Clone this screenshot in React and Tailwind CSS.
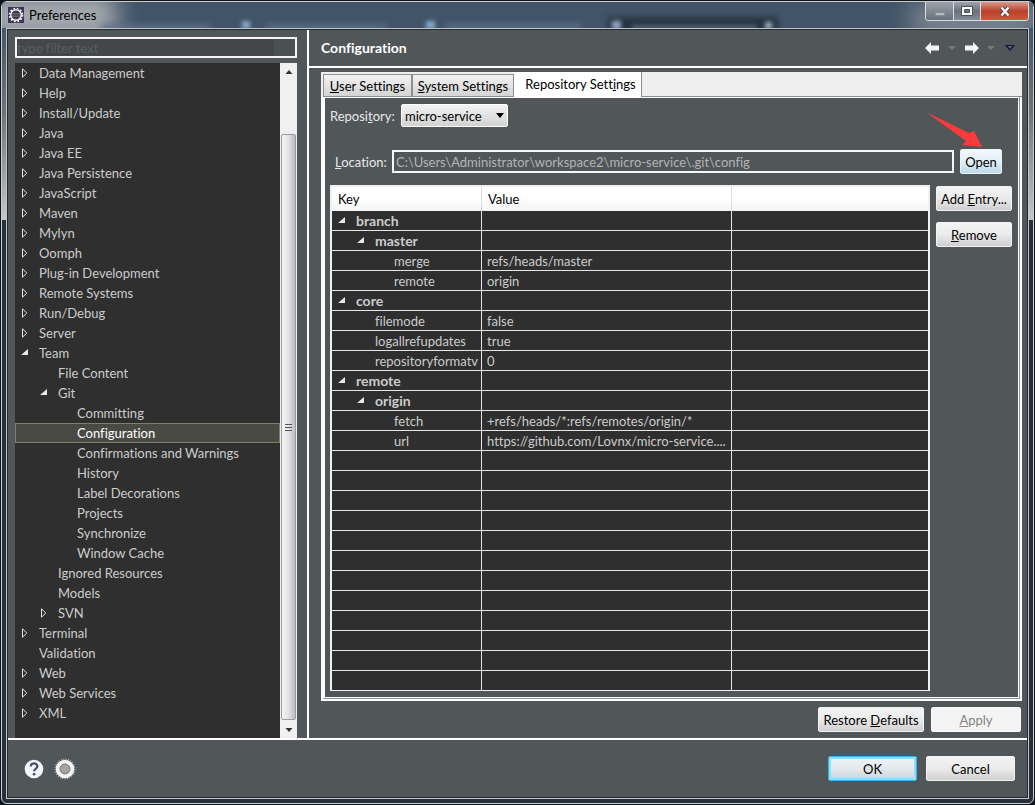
import React, { useState } from 'react';

const treeItems = [
  { label: 'Data Management', level: 0, state: 'closed' },
  { label: 'Help', level: 0, state: 'closed' },
  { label: 'Install/Update', level: 0, state: 'closed' },
  { label: 'Java', level: 0, state: 'closed' },
  { label: 'Java EE', level: 0, state: 'closed' },
  { label: 'Java Persistence', level: 0, state: 'closed' },
  { label: 'JavaScript', level: 0, state: 'closed' },
  { label: 'Maven', level: 0, state: 'closed' },
  { label: 'Mylyn', level: 0, state: 'closed' },
  { label: 'Oomph', level: 0, state: 'closed' },
  { label: 'Plug-in Development', level: 0, state: 'closed' },
  { label: 'Remote Systems', level: 0, state: 'closed' },
  { label: 'Run/Debug', level: 0, state: 'closed' },
  { label: 'Server', level: 0, state: 'closed' },
  { label: 'Team', level: 0, state: 'open' },
  { label: 'File Content', level: 1 },
  { label: 'Git', level: 1, state: 'open' },
  { label: 'Committing', level: 2 },
  { label: 'Configuration', level: 2 },
  { label: 'Confirmations and Warnings', level: 2 },
  { label: 'History', level: 2 },
  { label: 'Label Decorations', level: 2 },
  { label: 'Projects', level: 2 },
  { label: 'Synchronize', level: 2 },
  { label: 'Window Cache', level: 2 },
  { label: 'Ignored Resources', level: 1 },
  { label: 'Models', level: 1 },
  { label: 'SVN', level: 1, state: 'closed' },
  { label: 'Terminal', level: 0, state: 'closed' },
  { label: 'Validation', level: 0 },
  { label: 'Web', level: 0, state: 'closed' },
  { label: 'Web Services', level: 0, state: 'closed' },
  { label: 'XML', level: 0, state: 'closed' },
];

const entries = [
  { name: 'branch', level: 0, open: true },
  { name: 'master', level: 1, open: true },
  { name: 'merge', level: 2, value: 'refs/heads/master' },
  { name: 'remote', level: 2, value: 'origin' },
  { name: 'core', level: 0, open: true },
  { name: 'filemode', level: 1, value: 'false' },
  { name: 'logallrefupdates', level: 1, value: 'true' },
  { name: 'repositoryformatv', level: 1, value: '0' },
  { name: 'remote', level: 0, open: true },
  { name: 'origin', level: 1, open: true },
  { name: 'fetch', level: 2, value: '+refs/heads/*:refs/remotes/origin/*' },
  { name: 'url', level: 2, value: 'https://github.com/Lovnx/micro-service....' },
];

const TOTAL_ROWS = 24;

const treeIndent = ['pl-1', 'pl-[23px]', 'pl-[42px]'];
const cellIndent = ['pl-[5px]', 'pl-6', 'pl-[43px]'];

const Arrow = ({ state }) => (
  <svg className="w-[10px] h-[10px] mr-[9px] shrink-0" viewBox="0 0 10 10" aria-hidden="true">
    {state === 'closed' && <path d="M2.5 .8v8.400L6.800 5z" fill="none" stroke="#e4e4e4" />}
    {state === 'open' && <path d="M8 1v6H1z" fill="#e8e8e8" />}
  </svg>
);

const buttonTones = {
  normal: 'border-[#f4f4f4] from-[#f3f3f3] via-[#ebebeb] to-[#cfcfcf] text-black',
  hover: 'border-[#e6f4fb] from-[#f2f8fb] via-[#e2f0f7] to-[#bcd8e6] text-black',
  primary: 'border-[#35b4e6] ring-2 ring-inset ring-[#8ae0f8] from-[#eef4f6] via-[#e4eaec] to-[#ccd4d8] text-black',
  disabled: 'border-[#fbfbfb] from-[#f4f4f4] via-[#f4f4f4] to-[#f4f4f4] text-[#838383]',
};

const Button = ({ children, tone = 'normal', className = '', ...props }) => (
  <button
    type="button"
    className={`h-[25px] rounded-[2px] border bg-linear-to-b whitespace-nowrap ${buttonTones[tone]} ${className}`}
    {...props}
  >
    {children}
  </button>
);

const TitleBar = () => (
  <div className="relative h-[26px] flex items-start">
    {/* what shows through the glass */}
    <div className="absolute -inset-x-1 inset-y-0 overflow-hidden rounded-t-[5px]" aria-hidden="true">
      <div className="absolute -left-4 -top-2 w-[130px] h-[44px] bg-[#a9adb1] blur-md" />
      <div className="absolute left-[100px] top-[23px] w-[108px] h-[6px] bg-[#5e7389] blur-[3px]" />
      <div className="absolute left-[240px] top-[19px] w-[8px] h-[8px] bg-[#86a9cc] blur-[2px]" />
      <div className="absolute left-[264px] top-[23px] w-[120px] h-[5px] bg-[#5c7590] blur-[3px]" />
      <div className="absolute left-[424px] top-[19px] w-[9px] h-[8px] bg-[#86a9cc] blur-[2px]" />
      <div className="absolute left-[444px] top-[22px] w-[135px] h-[5px] bg-[#5c7590] blur-[3px]" />
      <div className="absolute left-[606px] top-[15px] w-[170px] h-[16px] bg-[#273440] blur-[3px]" />
      <div className="absolute left-[610px] top-[19px] w-[9px] h-[8px] bg-[#90aac8] blur-[2px]" />
      <div className="absolute left-[630px] top-[23px] w-[125px] h-[4px] bg-[#526579] blur-[2px]" />
      <div className="absolute left-[763px] top-[20px] w-[7px] h-[7px] bg-[#9fb1bb] blur-[2px]" />
      <div className="absolute -right-2 top-0 w-[130px] h-[36px] bg-[#7b858f] blur-md" />
    </div>
    <div className="relative flex items-center h-[26px] pl-[2px]">
      <svg className="w-4 h-4 mr-[5px]" viewBox="0 0 16 16" aria-hidden="true">
        <rect width="16" height="16" fill="#41345c" />
        <circle cx="8" cy="8" r="6.400" fill="none" stroke="#fff" strokeWidth="1.800" strokeDasharray="1.700 1.650" />
        <circle cx="8" cy="8" r="5.200" fill="#3d3a48" stroke="#fff" strokeWidth="1.300" />
        <path d="M4 6.500h8M3.600 8h8.800M4 9.500h8" stroke="#77738a" strokeWidth=".7" />
      </svg>
      <h1 className="text-black">Preferences</h1>
    </div>
    <div className="relative ml-auto flex h-[19px] border border-t-0 border-[#d9dde1] rounded-b-[4px] overflow-hidden">
      <button type="button" aria-label="Minimize" className="w-[28px] flex justify-center items-center border-r border-[#d9dde1] bg-linear-to-b from-[#9da3aa] to-[#68717b]">
        <span className="w-[10px] h-[4px] mt-[6px] bg-[#b7bbc0] border border-[#868c93]" />
      </button>
      <button type="button" aria-label="Maximize" className="w-[27px] flex justify-center items-center border-r border-[#d9dde1] bg-linear-to-b from-[#9fa5ac] via-[#69727d] via-50% to-[#838b94]">
        <svg className="w-[12px] h-[10px]" viewBox="0 0 12 10">
          <path d="M.5.5h11v9H.5z" fill="#fff" stroke="#4b5158" />
          <path d="M3.500 3.500h5v3h-5z" fill="#69727d" stroke="#4b5158" />
        </svg>
      </button>
      <button type="button" aria-label="Close" className="w-[47px] flex justify-center items-center bg-linear-to-b from-[#d8998d] from-0% via-[#b8402a] via-50% to-[#d0583c]">
        <svg className="w-[12px] h-[11px]" viewBox="0 0 12 11">
          <path d="M2.500 1.500 9.500 9.500M9.500 1.500 2.500 9.500" stroke="#4d3a3c" strokeWidth="4" />
          <path d="M2.500 1.500 9.500 9.500M9.500 1.500 2.500 9.500" stroke="#fff" strokeWidth="2.400" />
        </svg>
      </button>
    </div>
  </div>
);

const Sidebar = ({ selected, onSelect }) => (
  <div className="w-[301px] shrink-0 flex flex-col pl-[7px] pr-[10px] pt-[7px] border-r-2 border-white">
    <div className="flex border-2 border-[#f4f4f4] h-[21px] mb-[5px]">
      <input
        type="text"
        aria-label="Filter preferences"
        placeholder="type filter text"
        className="flex-1 min-w-0 bg-[#434749] text-[#dddddd] placeholder-[#585e61] outline-none"
      />
      <span className="w-[21px] bg-[#4b5052]" />
    </div>
    <div className="flex flex-1">
      <ul className="flex-1 min-w-0 bg-[#2f2f2f]">
        {treeItems.map((item) => (
          <li key={item.label}>
            <button
              type="button"
              onClick={() => onSelect(item.label)}
              className={`w-full h-5 flex items-center border ${treeIndent[item.level]} ${
                item.label === selected
                  ? 'bg-[#4a4a45] border-[#7b8168] text-white'
                  : 'border-transparent text-[#cccccc]'
              }`}
            >
              <Arrow state={item.state} />
              {item.label}
            </button>
          </li>
        ))}
      </ul>
      <div className="w-[17px] flex flex-col bg-[#f0f0f0]" aria-hidden="true">
        <svg className="w-[17px] h-[17px] shrink-0" viewBox="0 0 17 17">
          <path d="M5.500 11 9 7l3.500 4z" fill="#333" />
        </svg>
        <div className="h-[54px] shrink-0" />
        <div className="flex-1 mx-px flex flex-col items-center justify-center gap-[2px] rounded-[2px] border border-[#9a9a9a] bg-linear-to-r from-[#f5f5f5] via-[#e2e2e4] to-[#bcbcc0]">
          <span className="w-[7px] h-px bg-[#555]" />
          <span className="w-[7px] h-px bg-[#555]" />
          <span className="w-[7px] h-px bg-[#555]" />
        </div>
        <svg className="w-[17px] h-[18px] shrink-0" viewBox="0 0 17 18">
          <path d="M5.500 8 9 12l3.500-4z" fill="#333" />
        </svg>
      </div>
    </div>
  </div>
);

const PageHeader = () => (
  <div className="h-[38px] shrink-0 flex items-center justify-between pl-3 pr-3 border-b-2 border-white">
    <h2 className="text-[14px] font-bold text-white">Configuration</h2>
    <div className="flex items-center">
      <button type="button" aria-label="Back" className="mr-2">
        <svg className="w-[15px] h-[12px]" viewBox="0 0 15 12">
          <path d="M0 6 6 0v3.500h8v5H6V12z" fill="#f5f5f5" />
        </svg>
      </button>
      <button type="button" aria-label="Back history" className="mr-2">
        <svg className="w-[8px] h-[5px]" viewBox="0 0 8 5"><path d="M0 0h8L4 4z" fill="#767b7e" /></svg>
      </button>
      <button type="button" aria-label="Forward" className="mr-2">
        <svg className="w-[15px] h-[12px]" viewBox="0 0 15 12">
          <path d="M15 6 9 0v3.500H1v5h8V12z" fill="#f5f5f5" />
        </svg>
      </button>
      <button type="button" aria-label="Forward history" className="mr-[10px]">
        <svg className="w-[8px] h-[5px]" viewBox="0 0 8 5"><path d="M0 0h8L4 4z" fill="#767b7e" /></svg>
      </button>
      <button type="button" aria-label="View menu">
        <svg className="w-[10px] h-[6px]" viewBox="0 0 10 6">
          <path d="M1 .5h8L5 5z" fill="#596064" stroke="#14143c" strokeWidth="1.200" />
        </svg>
      </button>
    </div>
  </div>
);

const EntryTable = () => {
  const emptyRows = Array.from({ length: TOTAL_ROWS - entries.length - 1 });

  return (
    <div className="flex-1 min-w-0 border-2 border-b border-[#f0f0f0] bg-[#2f2f2f]">
      <table className="w-full table-fixed border-separate border-spacing-0 text-left">
        <colgroup>
          <col className="w-[150px]" />
          <col className="w-[250px]" />
          <col />
        </colgroup>
        <thead>
          <tr className="h-6 bg-linear-to-b from-white from-50% to-[#f3f4f5] text-black">
            <th className="font-normal p-0 pl-[6px] border-r border-[#d8dcdf]">Key</th>
            <th className="font-normal p-0 pl-[6px] border-r border-[#d8dcdf]">Value</th>
            <th className="p-0" />
          </tr>
        </thead>
        <tbody className="text-[#cccccc]">
          {entries.map((entry, i) => (
            <tr key={i} className="h-5">
              <td className="p-0 border-r border-b border-[#e6e6e6]">
                <div className={`flex items-center h-[19px] overflow-hidden whitespace-nowrap ${cellIndent[entry.level]} ${entry.open ? 'text-[14px] font-bold' : ''}`}>
                  <Arrow state={entry.open ? 'open' : undefined} />
                  {entry.name}
                </div>
              </td>
              <td className="p-0 pl-[5px] border-r border-b border-[#e6e6e6] whitespace-nowrap overflow-hidden">{entry.value}</td>
              <td className="p-0 border-b border-[#e6e6e6]" />
            </tr>
          ))}
          {emptyRows.map((_, i) => (
            <tr key={i} className="h-5">
              <td className="p-0 border-r border-b border-[#e6e6e6]" />
              <td className="p-0 border-r border-b border-[#e6e6e6]" />
              <td className="p-0 border-b border-[#e6e6e6]" />
            </tr>
          ))}
          <tr className="h-[19px]">
            <td className="p-0 border-r border-[#e6e6e6]" />
            <td className="p-0 border-r border-[#e6e6e6]" />
            <td className="p-0" />
          </tr>
        </tbody>
      </table>
    </div>
  );
};

const RepositorySettings = () => (
  <div className="flex-1 flex flex-col border-2 border-t-0 border-white">
    <div className="flex-1 flex flex-col border-r border-b border-l border-[#8b8f93] border-l-white">
      <div className="flex-1 flex flex-col border border-white pl-[5px] pr-[6px] pt-[6px] pb-[6px]">
        <div className="flex items-center">
          <label htmlFor="repository" className="w-[71px] text-[#e8e8e8]">Reposi<u>t</u>ory:</label>
          <div className="relative">
            <select id="repository" className="block appearance-none w-[107px] h-[23px] pl-[3px] rounded-[2px] border border-white bg-linear-to-b from-[#f3f3f3] to-[#d2d2d2] text-black">
              <option>micro-service</option>
            </select>
            <svg className="absolute right-1 top-[9px] w-[8px] h-[5px] pointer-events-none" viewBox="0 0 8 5">
              <path d="M0 0h8L4 5z" fill="#000" />
            </svg>
          </div>
        </div>

        <div className="flex items-center mt-[22px] pl-[5px] pr-[10px]">
          <label htmlFor="location" className="w-[57px] text-[#e8e8e8]"><u>L</u>ocation:</label>
          <input
            id="location"
            type="text"
            readOnly
            value="C:\Users\Administrator\workspace2\micro-service\.git\config"
            className="flex-1 min-w-0 h-[23px] px-[2px] border-2 border-[#f4f8fa] bg-[#515658] text-[#b4b4b4] outline-none"
          />
          <div className="relative ml-[6px]">
            <Button tone="hover" className="block w-[42px]">Open</Button>
            <svg className="absolute right-[20px] bottom-[26px] w-[56px] h-[36px] pointer-events-none" viewBox="0 0 56 36">
              <path d="M0 0 43 21 48 19 56 35 36 33 40 29z" fill="#fb3b3b" />
            </svg>
          </div>
        </div>

        <div className="flex mt-[11px]">
          <EntryTable />
          <div className="w-[76px] ml-[6px] flex flex-col gap-[11px] pt-px">
            <Button>Add <u>E</u>ntry...</Button>
            <Button><u>R</u>emove</Button>
          </div>
        </div>
      </div>
    </div>
  </div>
);

const tabClass = 'h-[23px] border border-[#8b8f93] bg-linear-to-b from-[#f2f2f2] to-[#d4d4d4] text-black whitespace-nowrap';

const Content = () => (
  <div className="flex-1 min-w-0 flex flex-col">
    <PageHeader />
    <div className="flex-1 flex flex-col pl-3 pr-[5px] pt-[4px] pb-[6px]">
      <div className="h-[25px] flex items-end bg-[#efefef] pl-[2px]" role="tablist">
        <button type="button" role="tab" className={`${tabClass} w-[89px]`}><u>U</u>ser Settings</button>
        <button type="button" role="tab" className={`${tabClass} w-[102px]`}><u>S</u>ystem Settings</button>
        <button type="button" role="tab" aria-selected="true" className="h-[25px] w-[128px] pb-[2px] pl-[6px] border-r border-[#8b8f93] bg-white text-black whitespace-nowrap">
          Repository Sett<u>i</u>ngs
        </button>
        <div className="flex-1 border-b border-[#8b8f93]" />
      </div>
      <RepositorySettings />
      <div className="flex justify-end gap-[7px] mt-[6px] pr-px">
        <Button className="w-[106px]">Restore <u>D</u>efaults</Button>
        <Button tone="disabled" className="w-[90px]" disabled><u>A</u>pply</Button>
      </div>
    </div>
  </div>
);

const Footer = () => (
  <div className="h-[59px] shrink-0 flex items-center border-t-2 border-white pl-4 pr-3">
    <button type="button" aria-label="Help" className="mr-[10px]">
      <svg className="w-5 h-5" viewBox="0 0 20 20">
        <circle cx="10" cy="10" r="9.300" fill="#f3f6fb" />
        <path d="M6.800 7.600c0-4.300 6.600-4 6.600-.3 0 2.600-3.300 2.600-3.300 5" fill="none" stroke="#44536b" strokeWidth="2.200" />
        <circle cx="10.100" cy="15.200" r="1.400" fill="#44536b" />
      </svg>
    </button>
    <button type="button" aria-label="Oomph recorder">
      <svg className="w-[22px] h-[22px]" viewBox="0 0 22 22">
        <circle cx="11" cy="11" r="10" fill="none" stroke="#ddd" strokeDasharray="1 1.500" />
        <circle cx="11" cy="11" r="9.300" fill="#f4f4f4" />
        <circle cx="11" cy="11" r="5" fill="#a5a3a1" stroke="#777" />
      </svg>
    </button>
    <div className="ml-auto flex gap-[9px]">
      <Button tone="primary" className="w-[89px]">OK</Button>
      <Button className="w-[89px]">Cancel</Button>
    </div>
  </div>
);

const App = () => {
  const [selected, setSelected] = useState('Configuration');

  return (
    <div className="min-h-screen flex flex-col bg-[#10151b] p-px font-['Lato','Open_Sans',sans-serif] text-[13px] leading-[18px] [font-variant-ligatures:none]">
      <div className="relative flex-1 flex flex-col px-1 pb-1 border border-[#c9cdd1] rounded-[6px] bg-[#26303b]">
        {/* bright window behind the upper part of the frame */}
        <div className="absolute inset-x-0 top-0 h-[218px] rounded-t-[5px] bg-linear-to-b from-[#425468] from-10% via-[#6f7378] via-50% to-[#c4c6c8]" aria-hidden="true" />
        <div className="absolute inset-x-0 top-0 h-[27px] rounded-t-[5px] bg-[#425468]" aria-hidden="true" />
        <TitleBar />
        <div className="relative flex-1 flex flex-col border border-[#c3c8cb]">
          <div className="flex-1 flex flex-col border border-[#23282c] bg-[#515658]">
            <div className="flex-1 flex">
              <Sidebar selected={selected} onSelect={setSelected} />
              <Content />
            </div>
            <Footer />
          </div>
        </div>
      </div>
    </div>
  );
};

export default App;
